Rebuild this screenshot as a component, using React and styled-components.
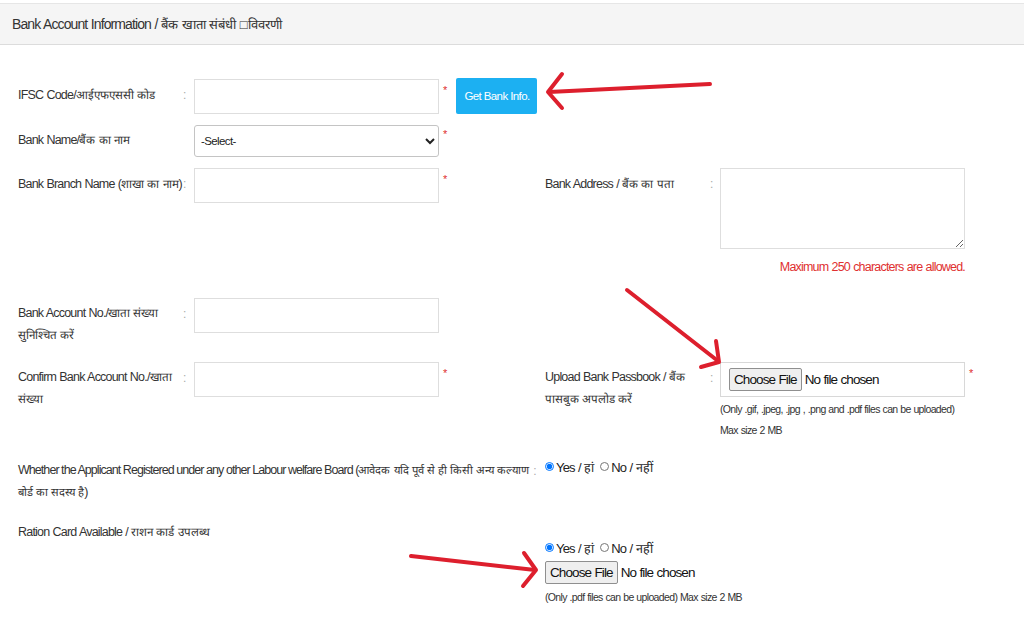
import React from 'react'
import styled, { createGlobalStyle } from 'styled-components'

const GlobalStyle = createGlobalStyle`
  html, body {
    margin: 0;
    padding: 0;
    background: #fff;
  }
  body {
    font-family: "Liberation Sans", Arial, sans-serif;
    color: #333;
    font-size: 12.5px;
    letter-spacing: -0.8px;
    word-spacing: 0.5px;
  }
`

// Hindi text keeps normal spacing so the conjuncts don't break
const Hi = styled.span`
  letter-spacing: 0;
  word-spacing: 0;
  font-size: ${p => p.$size || 11.6}px;
`

const Page = styled.div`
  position: relative;
  width: 1024px;
  height: 640px;
  overflow: hidden;
  padding-top: 3px;
  box-sizing: border-box;
`

const Heading = styled.div`
  height: 42px;
  background: #f5f5f5;
  border-top: 1px solid #e6e6e6;
  border-bottom: 1px solid #dcdcdc;
  display: flex;
  align-items: center;
  padding-left: 12px;
  font-size: 14px;
  letter-spacing: -0.9px;
  color: #333;
  box-sizing: border-box;
  white-space: pre;
`

const Body = styled.div`
  padding: 34px 0 0 18px;
  display: flex;
  flex-direction: column;
`

const Row = styled.div`
  display: flex;
  align-items: flex-start;
  height: ${p => p.$h}px;
`

const Cell = styled.div`
  display: flex;
  align-items: flex-start;
  width: ${p => p.$width || 527}px;
  flex-shrink: 0;
`

const Label = styled.div`
  width: ${p => p.$width || 165}px;
  flex-shrink: 0;
  line-height: 21px;
  padding-top: ${p => p.$top ?? 5}px;
  white-space: ${p => (p.$nowrap ? 'nowrap' : 'normal')};
`

const LongLabel = styled.div`
  flex-shrink: 0;
  line-height: 22px;
  white-space: nowrap;
  letter-spacing: -0.95px;
  word-spacing: 0;
`

const Colon = styled.div`
  width: ${p => p.$width || 11}px;
  flex-shrink: 0;
  color: #aaa;
  padding-top: ${p => p.$top ?? 10}px;
  margin-left: ${p => p.$left || 0}px;
  font-size: 12px;
  line-height: 12px;
`

const Field = styled.div`
  display: flex;
  align-items: flex-start;
`

const Stack = styled.div`
  display: flex;
  flex-direction: column;
  margin-top: ${p => p.$top || 0}px;
`

const TextInput = styled.input`
  width: 245px;
  height: 35px;
  box-sizing: border-box;
  border: 1px solid #dedede;
  background: #fff;
  outline: none;
  font: inherit;
`

const Select = styled.select`
  width: 245px;
  height: 32px;
  box-sizing: border-box;
  border: 1px solid #c4c4c4;
  border-radius: 3px;
  background: #fff;
  font-family: inherit;
  font-size: 11.5px;
  letter-spacing: -0.6px;
  color: #222;
  padding-left: 2px;
`

const TextArea = styled.textarea`
  width: 245px;
  height: 81px;
  box-sizing: border-box;
  border: 1px solid #dedede;
  resize: both;
  font: inherit;
`

const Star = styled.span`
  color: #e03030;
  font-size: 11px;
  margin-left: 4px;
  line-height: 11px;
  padding-top: ${p => p.$top ?? 6}px;
`

const BlueButton = styled.button`
  margin-left: 10px;
  margin-top: -1px;
  height: 36px;
  width: 81px;
  border: none;
  border-radius: 2px;
  background: #1cb0f2;
  color: #fff;
  font-family: inherit;
  font-size: 11.5px;
  letter-spacing: -0.6px;
  padding: 0;
`

const FileBox = styled.div`
  width: 245px;
  height: 35px;
  box-sizing: border-box;
  border: 1px solid #d8d8d8;
  display: flex;
  align-items: center;
  padding-left: 8px;
`

const FileRow = styled.div`
  display: flex;
  align-items: center;
  margin-top: ${p => p.$top || 0}px;
`

const ChooseButton = styled.span`
  display: inline-block;
  height: 23px;
  line-height: 21px;
  box-sizing: border-box;
  padding: 0 4px;
  border: 1px solid #8f8f8f;
  border-radius: 2px;
  background: #efefef;
  color: #111;
  font-size: 13.5px;
  letter-spacing: -0.9px;
`

const NoFile = styled.span`
  margin-left: 3px;
  font-size: 13.5px;
  letter-spacing: -0.9px;
  color: #111;
`

const Hint = styled.div`
  font-size: 10.5px;
  letter-spacing: -0.65px;
  color: #333;
  line-height: 12px;
  margin-top: ${p => p.$top || 0}px;
`

const ErrorText = styled.div`
  width: 245px;
  text-align: right;
  color: #e03030;
  font-size: 12.5px;
  margin-top: 11px;
  line-height: 14px;
`

const Radios = styled.div`
  display: flex;
  align-items: center;
  gap: 6px;
  font-size: 13px;
  color: #222;
`

const RadioLabel = styled.label`
  display: flex;
  align-items: center;
  white-space: pre;
`

const Radio = styled.input`
  margin: 0 2px 3px 0;
  width: 9px;
  height: 9px;
`

const Arrows = styled.svg`
  position: absolute;
  left: 0;
  top: 0;
  pointer-events: none;
`

const YesNo = ({ name }) => (
  <Radios>
    <RadioLabel><Radio type="radio" defaultChecked name={name} />Yes / <Hi $size={12.5}>हां</Hi></RadioLabel>
    <RadioLabel><Radio type="radio" name={name} />No / <Hi $size={12.5}>नहीं</Hi></RadioLabel>
  </Radios>
)

export default function App() {
  return (
    <Page>
      <GlobalStyle />
      <Heading>Bank Account Information / <Hi $size={13}>बैंक खाता संबंधी □विवरणी</Hi></Heading>
      <Body>
        <Row $h={46}>
          <Cell>
            <Label>IFSC Code/<Hi>आईएफएससी कोड</Hi></Label>
            <Colon>:</Colon>
            <Field>
              <TextInput />
              <Star>*</Star>
              <BlueButton>Get Bank Info.</BlueButton>
            </Field>
          </Cell>
        </Row>
        <Row $h={43}>
          <Cell>
            <Label $top={4}>Bank Name/<Hi>बैंक का नाम</Hi></Label>
            <Colon />
            <Field>
              <Select defaultValue="">
                <option value="">-Select-</option>
              </Select>
              <Star $top={4}>*</Star>
            </Field>
          </Cell>
        </Row>
        <Row $h={130}>
          <Cell>
            <Label $nowrap>Bank Branch Name (<Hi>शाखा का नाम</Hi>)</Label>
            <Colon>:</Colon>
            <Field>
              <TextInput />
              <Star>*</Star>
            </Field>
          </Cell>
          <Cell $width={460}>
            <Label>Bank Address / <Hi>बैंक का पता</Hi></Label>
            <Colon $width={10}>:</Colon>
            <Stack>
              <TextArea />
              <ErrorText>Maximum 250 characters are allowed.</ErrorText>
            </Stack>
          </Cell>
        </Row>
        <Row $h={64}>
          <Cell>
            <Label $top={4}>Bank Account No./<Hi>खाता संख्या सुनिश्चित करें</Hi></Label>
            <Colon>:</Colon>
            <Field>
              <TextInput />
            </Field>
          </Cell>
        </Row>
        <Row $h={97}>
          <Cell>
            <Label $top={4}>Confirm Bank Account No./<Hi>खाता संख्या</Hi></Label>
            <Colon>:</Colon>
            <Field>
              <TextInput />
              <Star>*</Star>
            </Field>
          </Cell>
          <Cell $width={460}>
            <Label $top={4}>Upload Bank Passbook / <Hi>बैंक पासबुक अपलोड करें</Hi></Label>
            <Colon $width={10}>:</Colon>
            <Stack>
              <Field>
                <FileBox>
                  <ChooseButton>Choose File</ChooseButton>
                  <NoFile>No file chosen</NoFile>
                </FileBox>
                <Star>*</Star>
              </Field>
              <Hint $top={6}>(Only .gif, .jpeg, .jpg , .png and .pdf files can be uploaded)</Hint>
              <Hint $top={9}>Max size 2 MB</Hint>
            </Stack>
          </Cell>
        </Row>
        <Row $h={62}>
          <Cell>
            <LongLabel>
              Whether the Applicant Registered under any other Labour welfare Board (<Hi $size={11.2}>आवेदक यदि पूर्व से ही किसी अन्य कल्याण</Hi>
              <br />
              <Hi $size={11.2}>बोर्ड का सदस्य है</Hi>)
            </LongLabel>
            <Colon $width={6} $top={6} $left={4}>:</Colon>
          </Cell>
          <Stack>
            <YesNo name="board" />
          </Stack>
        </Row>
        <Row $h={100}>
          <Cell>
            <Label $width={517} $top={0}>Ration Card Available / <Hi>राशन कार्ड उपलब्ध</Hi></Label>
          </Cell>
          <Stack $top={19}>
            <YesNo name="ration" />
            <FileRow $top={4}>
              <ChooseButton>Choose File</ChooseButton>
              <NoFile>No file chosen</NoFile>
            </FileRow>
            <Hint $top={7}>(Only .pdf files can be uploaded) Max size 2 MB</Hint>
          </Stack>
        </Row>
      </Body>
      <Arrows width="1024" height="640" viewBox="0 0 1024 640">
        <g stroke="#dd1f2d" strokeWidth="4" strokeLinecap="round" strokeLinejoin="round" fill="none">
          <path d="M710 84 L549 92" />
          <path d="M562 74 L548 92 L562 108" />
          <path d="M627 290 L718 361" />
          <path d="M716 341 L719 362 L701 367" />
          <path d="M411 556 L535 570" />
          <path d="M524 553 L536 570 L523 586" />
        </g>
      </Arrows>
    </Page>
  )
}
